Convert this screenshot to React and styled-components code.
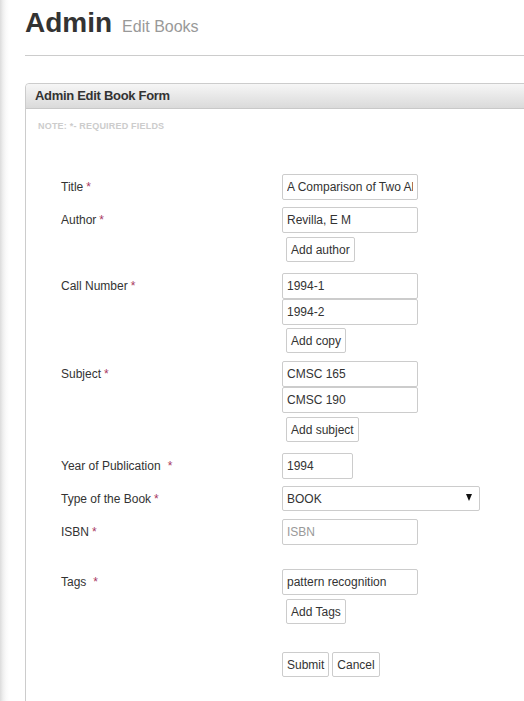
import styled, { createGlobalStyle } from "styled-components";

const GlobalStyle = createGlobalStyle`
  html, body {
    margin: 0;
    padding: 0;
    overflow: hidden;
    background: #fff;
  }
  body {
    font-family: "Liberation Sans", Arial, sans-serif;
    color: #333;
  }
`;

const Page = styled.div`
  min-height: 100vh;
  padding-left: 25px;
  background: linear-gradient(90deg, #dcdcdc 0px, #efefef 3px, #fafafa 6px, #fff 9px);
`;

const Header = styled.div`
  padding-top: 9px;
  height: 28px;
  display: flex;
  align-items: baseline;
  gap: 10px;
`;

const Title = styled.h1`
  margin: 0;
  font-size: 28px;
  line-height: 28px;
  font-weight: 700;
  color: #333;
`;

const SubTitle = styled.span`
  font-size: 16px;
  color: #999;
`;

const Rule = styled.div`
  height: 1px;
  background: #ccc;
  margin-top: 18px;
`;

const Panel = styled.div`
  margin-top: 27px;
  margin-right: -12px;
  border: 1px solid #ccc;
  border-top-left-radius: 4px;
  min-height: 640px;
`;

const PanelHeading = styled.div`
  height: 24px;
  line-height: 24px;
  padding-left: 9px;
  font-size: 13px;
  font-weight: 700;
  letter-spacing: -0.3px;
  color: #333;
  background: linear-gradient(#f6f6f6, #dadada);
  border-bottom: 1px solid #c8c8c8;
  border-top-left-radius: 4px;
`;

const PanelBody = styled.div`
  padding: 11px 12px 0;
`;

const Note = styled.div`
  font-size: 9px;
  line-height: 12px;
  font-weight: 700;
  letter-spacing: 0.2px;
  color: #ccc;
`;

const Form = styled.form`
  margin: 42px 0 0 23px;
`;

const Row = styled.div`
  display: grid;
  grid-template-columns: 221px 1fr;
  margin-top: ${(p) => p.$top || 0}px;
`;

const Label = styled.label`
  font-size: 12px;
  line-height: 26px;
  color: #333;
`;

const Req = styled.span`
  color: #a8385f;
  margin-left: ${(p) => (p.$wide ? 7 : 3)}px;
`;

const Field = styled.div`
  display: flex;
  flex-direction: column;
  align-items: flex-start;
`;

const Input = styled.input`
  box-sizing: border-box;
  width: ${(p) => p.$width || 136}px;
  height: 26px;
  margin: 0;
  padding: 0 4px;
  border: 1px solid #ccc;
  border-radius: 2px;
  font-family: inherit;
  font-size: 12px;
  color: #333;
  background: #fff;
  outline: none;
  &::placeholder {
    color: #999;
  }
`;

const Button = styled.button`
  box-sizing: border-box;
  height: 25px;
  margin: ${(p) => (p.$plain ? "0" : "4px 0 0 4px")};
  padding: 0 4px;
  border: 1px solid #ccc;
  border-radius: 2px;
  background: #fff;
  font-family: inherit;
  font-size: 12px;
  color: #333;
  cursor: pointer;
`;

const SelectWrap = styled.div`
  position: relative;
  width: 198px;
  height: 25px;
`;

const Select = styled.select`
  appearance: none;
  box-sizing: border-box;
  width: 100%;
  height: 25px;
  margin: 0;
  padding: 0 4px;
  border: 1px solid #ccc;
  border-radius: 2px;
  background: #fff;
  font-family: inherit;
  font-size: 12px;
  color: #333;
  outline: none;
`;

const Caret = styled.span`
  position: absolute;
  right: 8px;
  top: 8px;
  width: 0;
  height: 0;
  border-left: 3.5px solid transparent;
  border-right: 3.5px solid transparent;
  border-top: 7px solid #111;
  pointer-events: none;
`;

const Actions = styled.div`
  display: flex;
  gap: 3px;
`;

export default function App() {
  return (
    <Page>
      <GlobalStyle />
      <Header>
        <Title>Admin</Title>
        <SubTitle>Edit Books</SubTitle>
      </Header>
      <Rule />
      <Panel>
        <PanelHeading>Admin Edit Book Form</PanelHeading>
        <PanelBody>
          <Note>NOTE: *- REQUIRED FIELDS</Note>
          <Form onSubmit={(e) => e.preventDefault()}>
            <Row>
              <Label>
                Title<Req>*</Req>
              </Label>
              <Field>
                <Input defaultValue="A Comparison of Two Algorithms for Pattern Recognition" />
              </Field>
            </Row>
            <Row $top={7}>
              <Label>
                Author<Req>*</Req>
              </Label>
              <Field>
                <Input defaultValue="Revilla, E M" />
                <Button type="button">Add author</Button>
              </Field>
            </Row>
            <Row $top={11}>
              <Label>
                Call Number<Req>*</Req>
              </Label>
              <Field>
                <Input defaultValue="1994-1" />
                <Input defaultValue="1994-2" />
                <Button type="button" style={{ marginTop: 3 }}>
                  Add copy
                </Button>
              </Field>
            </Row>
            <Row $top={8}>
              <Label>
                Subject<Req>*</Req>
              </Label>
              <Field>
                <Input defaultValue="CMSC 165" />
                <Input defaultValue="CMSC 190" />
                <Button type="button">Add subject</Button>
              </Field>
            </Row>
            <Row $top={11}>
              <Label>
                Year of Publication<Req $wide>*</Req>
              </Label>
              <Field>
                <Input $width={71} defaultValue="1994" />
              </Field>
            </Row>
            <Row $top={7}>
              <Label>
                Type of the Book<Req>*</Req>
              </Label>
              <Field>
                <SelectWrap>
                  <Select defaultValue="BOOK">
                    <option>BOOK</option>
                    <option>THESIS</option>
                    <option>MAGAZINE</option>
                  </Select>
                  <Caret />
                </SelectWrap>
              </Field>
            </Row>
            <Row $top={7}>
              <Label>
                ISBN<Req>*</Req>
              </Label>
              <Field>
                <Input placeholder="ISBN" />
              </Field>
            </Row>
            <Row $top={24}>
              <Label>
                Tags<Req $wide>*</Req>
              </Label>
              <Field>
                <Input defaultValue="pattern recognition" />
                <Button type="button">Add Tags</Button>
              </Field>
            </Row>
            <Row $top={28}>
              <span />
              <Actions>
                <Button $plain type="submit">
                  Submit
                </Button>
                <Button $plain type="button">
                  Cancel
                </Button>
              </Actions>
            </Row>
          </Form>
        </PanelBody>
      </Panel>
    </Page>
  );
}
